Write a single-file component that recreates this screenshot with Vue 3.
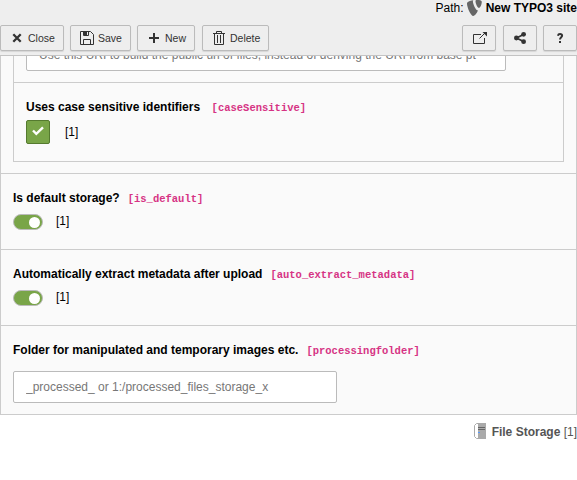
<script setup>
const toggles = [
  { label: 'Is default storage?', name: 'is_default' },
  { label: 'Automatically extract metadata after upload', name: 'auto_extract_metadata' },
]
</script>

<template>
  <div class="module">
    <header class="docheader">
      <div class="path">
        <span>Path:</span>
        <svg class="logo" width="16" height="16" viewBox="0 0 16 16">
          <path fill="#666" d="M11.1 10.3c-.2.1-.4.1-.6.1C8.600 10.400 5.900 3.800 5.900 1.600c0-.8.2-1.100.5-1.300C4 .6 1.200 1.400.3 2.500c-.2.3-.3.700-.3 1.200C0 7.100 3.700 16 6.300 16c1.200 0 3.200-2 4.800-5.700M10 0c2.400 0 4.800.4 4.800 1.700 0 2.800-1.800 6.200-2.700 6.200-1.600 0-3.600-4.500-3.600-6.700C8.500.2 8.900 0 10 0" />
        </svg>
        <b>New TYPO3 site</b>
      </div>
      <div class="toolbar">
        <button class="btn close">
          <svg width="16" height="16" viewBox="0 0 16 16"><path fill="none" stroke="#333" stroke-width="2.3" d="M4.300 4.300l7.400 7.400M11.700 4.300l-7.400 7.400" /></svg>
          <span>Close</span>
        </button>
        <button class="btn save">
          <svg width="16" height="16" viewBox="0 0 16 16"><path fill="none" stroke="#333" d="M1.500 1.500h10l3 3v10h-13zM4.500 14.500v-5h7v5M4.500 1.500v4h5v-4" /><path fill="#333" d="M5 1h3v4H5z" /></svg>
          <span>Save</span>
        </button>
        <button class="btn new">
          <svg width="16" height="16" viewBox="0 0 16 16"><path fill="#333" d="M7 3h2v4h4v2H9v4H7V9H3V7h4z" /></svg>
          <span>New</span>
        </button>
        <button class="btn delete">
          <svg width="16" height="16" viewBox="0 0 16 16"><path fill="none" stroke="#333" d="M2 3.500h12M5.500 3V1.500h5V3M3.500 4v10.500h9V4M6.500 5v8M9.500 5v8" /></svg>
          <span>Delete</span>
        </button>
        <span class="spacer"></span>
        <button class="btn tool">
          <svg width="16" height="16" viewBox="0 0 16 16"><path fill="none" stroke="#333" d="M9 4.500H1.500v9h11V8M7.500 8.500l5.500-5.500" /><path fill="#333" d="M10.500 2H15v4.500z" /></svg>
        </button>
        <button class="btn tool">
          <svg width="16" height="16" viewBox="0 0 16 16"><path fill="none" stroke="#333" stroke-width="1.700" d="M12 4.300L4.500 8l7.500 3.700" /><g fill="#333"><circle cx="11.600" cy="4.300" r="2.400" /><circle cx="4.400" cy="8" r="2.400" /><circle cx="11.600" cy="11.700" r="2.400" /></g></svg>
        </button>
        <button class="btn tool">
          <svg width="16" height="16" viewBox="0 0 16 16"><path fill="none" stroke="#333" stroke-width="2" d="M5.900 5.700C6.200 4.400 7 4 8 4c1.300 0 2.100.7 2.100 1.700C10.100 7.200 8 7.300 8 9.600" /><path fill="#333" d="M7 11h2v2H7z" /></svg>
        </button>
      </div>
    </header>

    <main class="form">
      <section class="flexform">
        <div class="uri-row">
          <input class="field wide" placeholder="Use this URI to build the public url of files, instead of deriving the URI from base pt" />
        </div>
        <div class="case-row">
          <label class="title"><span>Uses case sensitive identifiers</span><code class="spaced">[caseSensitive]</code></label>
          <div class="check-line">
            <span class="check">
              <svg width="14" height="12" viewBox="0 0 14 12"><path fill="none" stroke="#fff" stroke-width="2.400" d="M2 5.500l3.300 3.300L12 2.400" /></svg>
            </span>
            <span>[1]</span>
          </div>
        </div>
      </section>

      <section v-for="item in toggles" :key="item.name" class="row">
        <label class="title"><span>{{ item.label }}</span><code>[{{ item.name }}]</code></label>
        <div class="toggle-line">
          <span class="toggle"><i></i></span>
          <span>[1]</span>
        </div>
      </section>

      <section class="row folder">
        <label class="title"><span>Folder for manipulated and temporary images etc.</span><code>[processingfolder]</code></label>
        <input class="field" placeholder="_processed_ or 1:/processed_files_storage_x" />
      </section>
    </main>

    <footer class="record">
      <svg width="16" height="16" viewBox="0 0 16 16">
        <path fill="#aaa" d="M4 0h8v16H4z" />
        <path fill="none" stroke="#aaa" d="M4 .5H2.500L.5 2.500v11L2.500 15.500H4" />
        <path fill="#666" d="M4 4h7v1H4zM4 6h7v1H4z" />
        <path fill="#59f" d="M4 9h2v1H4z" />
      </svg>
      <span><b>File Storage</b> [1]</span>
    </footer>
  </div>
</template>

<style>
body {
  background: #fff;
  overflow: hidden;
}
</style>

<style scoped>
* {
  box-sizing: border-box;
}
.module {
  height: 480px;
  font: 12px/18px "Liberation Sans", Arial, sans-serif;
  color: #000;
}
.docheader {
  height: 56px;
  background: #eee;
  border-bottom: 1px solid #c3c3c3;
}
.path {
  height: 25px;
  display: flex;
  justify-content: flex-end;
  line-height: 16px;
  white-space: nowrap;
}
.logo {
  margin: 0 3px 0 3px;
}
.toolbar {
  display: flex;
}
.btn {
  flex: none;
  display: flex;
  align-items: center;
  height: 26px;
  padding: 0 8px;
  gap: 3px;
  border: 1px solid #bbb;
  border-radius: 2px;
  background: #eee;
  box-shadow: 0 1px 1px rgba(0, 0, 0, 0.1);
  color: #333;
  font: 10.500px/16px "Liberation Sans", Arial, sans-serif;
}
.btn svg {
  flex: none;
}
.close { width: 64px; margin-right: 6px; }
.save { width: 61px; margin-right: 6px; }
.new { width: 58px; margin-right: 7px; }
.delete { width: 67px; }
.spacer { flex: 1; }
.tool {
  width: 34px;
  margin-left: 7px;
}
.tool:nth-last-child(2) {
  margin-right: -1px;
}
.tool:nth-last-child(3) svg {
  margin-left: 1px;
}
.form {
  height: 359px;
  overflow: hidden;
  border: 1px solid #ccc;
  border-top: 0;
  background: #fafafa;
}
.flexform {
  height: 106px;
  margin: 0 12px 11px;
  border: 1px solid #ccc;
  border-top: 0;
}
.uri-row {
  height: 27px;
  padding-left: 12px;
  overflow: hidden;
  border-bottom: 1px solid #ccc;
}
.field {
  display: block;
  width: 324px;
  height: 32px;
  margin: 0;
  padding: 0 12px;
  border: 1px solid #bbb;
  border-radius: 2px;
  background: #fff;
  font: 12px/18px "Liberation Sans", Arial, sans-serif;
  outline: 0;
}
.field::placeholder {
  color: #777;
}
.wide {
  width: 480px;
  margin-top: -17px;
}
.case-row {
  padding: 15px 12px 0;
}
.title {
  display: flex;
  height: 18px;
  font-weight: 700;
}
code {
  margin-left: 8px;
  color: #d63384;
  font: 700 10.500px/20px "Liberation Mono", monospace;
}
.spaced {
  margin-left: 11.500px;
}
.check-line {
  display: flex;
  align-items: center;
  height: 24px;
  margin-top: 4px;
  gap: 15px;
}
.check {
  display: flex;
  align-items: center;
  justify-content: center;
  width: 24px;
  height: 24px;
  padding-bottom: 2px;
  border: 1px solid #557a2f;
  border-radius: 2px;
  background: #79a548;
}
.row {
  height: 76px;
  padding: 15px 12px 0;
  border-top: 1px solid #ccc;
}
.toggle-line {
  display: flex;
  gap: 13px;
  margin-top: 5px;
}
.toggle {
  display: flex;
  align-items: center;
  justify-content: flex-end;
  width: 30px;
  height: 16px;
  margin-top: 2px;
  padding-right: 2px;
  border: 1px solid #bbb;
  border-radius: 8px;
  background: #79a548;
}
.toggle i {
  width: 11px;
  height: 11px;
  border-radius: 50%;
  background: #fff;
}
.folder {
  height: 89px;
}
.folder .field {
  margin-top: 12px;
}
.record {
  display: flex;
  justify-content: flex-end;
  padding-top: 8px;
  gap: 2px;
  color: #555;
}
</style>
